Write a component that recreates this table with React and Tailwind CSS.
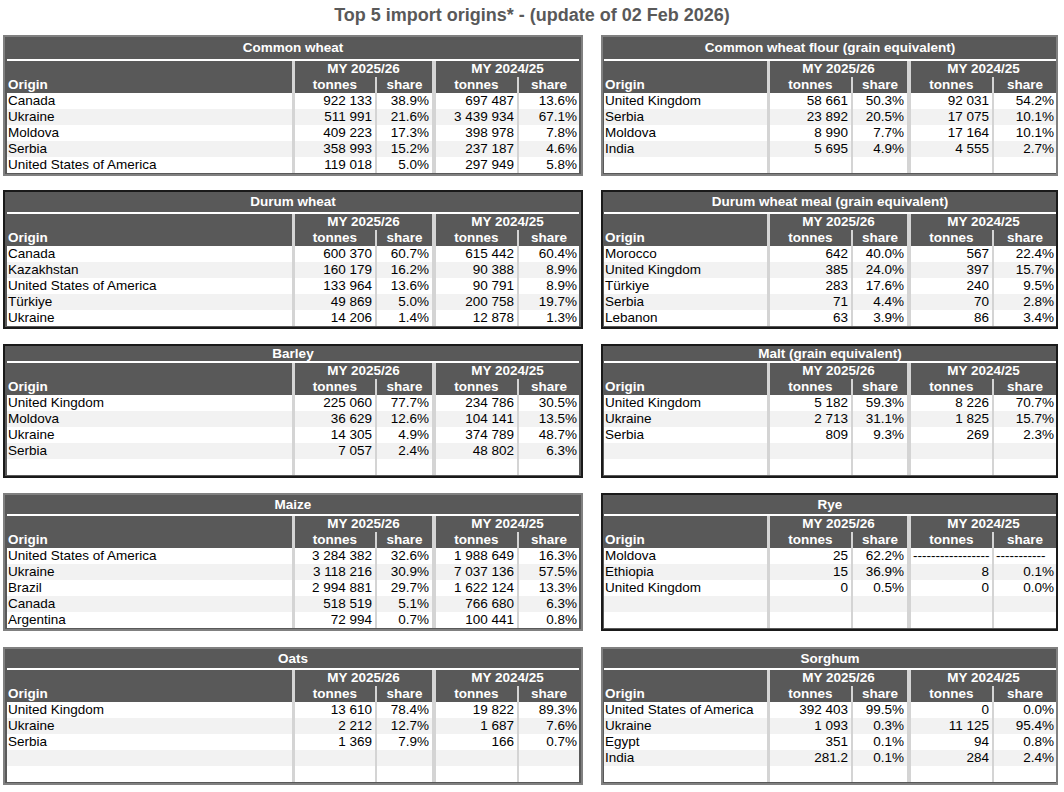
import React from "react";

const LEFT_COLS = "grid-cols-[285px_83px_57px_85px_62px]";
const RIGHT_COLS = "grid-cols-[163px_84px_56px_85px_64px]";

const rows = [
  {
    titleH: "h-[22px]",
    mt: "mt-[5px]",
    left: {
      title: "Common wheat",
      border: "border-[#808080]",
      data: [
        ["Canada", "922 133", "38.9%", "697 487", "13.6%"],
        ["Ukraine", "511 991", "21.6%", "3 439 934", "67.1%"],
        ["Moldova", "409 223", "17.3%", "398 978", "7.8%"],
        ["Serbia", "358 993", "15.2%", "237 187", "4.6%"],
        ["United States of America", "119 018", "5.0%", "297 949", "5.8%"],
      ],
    },
    right: {
      title: "Common wheat flour (grain equivalent)",
      border: "border-[#808080]",
      data: [
        ["United Kingdom", "58 661", "50.3%", "92 031", "54.2%"],
        ["Serbia", "23 892", "20.5%", "17 075", "10.1%"],
        ["Moldova", "8 990", "7.7%", "17 164", "10.1%"],
        ["India", "5 695", "4.9%", "4 555", "2.7%"],
      ],
    },
  },
  {
    titleH: "h-[20px]",
    mt: "mt-[14px]",
    left: {
      title: "Durum wheat",
      border: "border-[#1a1a1a]",
      data: [
        ["Canada", "600 370", "60.7%", "615 442", "60.4%"],
        ["Kazakhstan", "160 179", "16.2%", "90 388", "8.9%"],
        ["United States of America", "133 964", "13.6%", "90 791", "8.9%"],
        ["Türkiye", "49 869", "5.0%", "200 758", "19.7%"],
        ["Ukraine", "14 206", "1.4%", "12 878", "1.3%"],
      ],
    },
    right: {
      title: "Durum wheat meal (grain equivalent)",
      border: "border-[#1a1a1a]",
      data: [
        ["Morocco", "642", "40.0%", "567", "22.4%"],
        ["United Kingdom", "385", "24.0%", "397", "15.7%"],
        ["Türkiye", "283", "17.6%", "240", "9.5%"],
        ["Serbia", "71", "4.4%", "70", "2.8%"],
        ["Lebanon", "63", "3.9%", "86", "3.4%"],
      ],
    },
  },
  {
    titleH: "h-[15px]",
    mt: "mt-[15px]",
    left: {
      title: "Barley",
      border: "border-[#1a1a1a]",
      data: [
        ["United Kingdom", "225 060", "77.7%", "234 786", "30.5%"],
        ["Moldova", "36 629", "12.6%", "104 141", "13.5%"],
        ["Ukraine", "14 305", "4.9%", "374 789", "48.7%"],
        ["Serbia", "7 057", "2.4%", "48 802", "6.3%"],
      ],
    },
    right: {
      title: "Malt (grain equivalent)",
      border: "border-[#1a1a1a]",
      data: [
        ["United Kingdom", "5 182", "59.3%", "8 226", "70.7%"],
        ["Ukraine", "2 713", "31.1%", "1 825", "15.7%"],
        ["Serbia", "809", "9.3%", "269", "2.3%"],
      ],
    },
  },
  {
    titleH: "h-[19px]",
    mt: "mt-[15px]",
    left: {
      title: "Maize",
      border: "border-[#808080]",
      data: [
        ["United States of America", "3 284 382", "32.6%", "1 988 649", "16.3%"],
        ["Ukraine", "3 118 216", "30.9%", "7 037 136", "57.5%"],
        ["Brazil", "2 994 881", "29.7%", "1 622 124", "13.3%"],
        ["Canada", "518 519", "5.1%", "766 680", "6.3%"],
        ["Argentina", "72 994", "0.7%", "100 441", "0.8%"],
      ],
    },
    right: {
      title: "Rye",
      border: "border-[#1a1a1a]",
      data: [
        ["Moldova", "25", "62.2%", "-", "-"],
        ["Ethiopia", "15", "36.9%", "8", "0.1%"],
        ["United Kingdom", "0", "0.5%", "0", "0.0%"],
      ],
    },
  },
  {
    titleH: "h-[19px]",
    mt: "mt-[16px]",
    left: {
      title: "Oats",
      border: "border-[#808080]",
      data: [
        ["United Kingdom", "13 610", "78.4%", "19 822", "89.3%"],
        ["Ukraine", "2 212", "12.7%", "1 687", "7.6%"],
        ["Serbia", "1 369", "7.9%", "166", "0.7%"],
      ],
    },
    right: {
      title: "Sorghum",
      border: "border-[#808080]",
      data: [
        ["United States of America", "392 403", "99.5%", "0", "0.0%"],
        ["Ukraine", "1 093", "0.3%", "11 125", "95.4%"],
        ["Egypt", "351", "0.1%", "94", "0.8%"],
        ["India", "281.2", "0.1%", "284", "2.4%"],
      ],
    },
  },
];

const div = "border-[#d4d4d4]";

const Panel = ({ table, cols, pad, titleH }) => {
  const data = [...table.data];
  while (data.length < 5) data.push(["", "", "", "", ""]);

  return (
    <div className={`border-2 ${table.border} bg-[#595959] pb-px ${pad}`}>
      <div className={`${titleH} flex items-center justify-center text-[13.5px] font-bold text-white leading-4 whitespace-nowrap`}>
        {table.title}
      </div>
      <div className="h-[2px] bg-white" />
      <div className={`grid ${cols} text-[13.5px] leading-4 whitespace-nowrap`}>
        {/* header row 1 */}
        <div className="h-4" />
        <div className={`col-span-2 h-4 border-l-[3px] ${div} text-center font-bold text-white`}>
          MY 2025/26
        </div>
        <div className={`col-span-2 h-4 border-l-4 ${div} text-center font-bold text-white`}>
          MY 2024/25
        </div>
        {/* header row 2 */}
        <div className="h-4 pl-px font-bold text-white">Origin</div>
        <div className={`h-4 border-l-[3px] ${div} text-center font-bold text-white`}>tonnes</div>
        <div className={`h-4 border-l-2 ${div} text-center font-bold text-white`}>share</div>
        <div className={`h-4 border-l-4 ${div} text-center font-bold text-white`}>tonnes</div>
        <div className={`h-4 border-l-2 ${div} text-center font-bold text-white`}>share</div>

        {data.map((r, i) => {
          const bg = i % 2 === 1 ? "bg-[#f2f2f2]" : "bg-white";
          const dash = r[3] === "-";
          return (
            <React.Fragment key={i}>
              <div className={`h-4 ${bg} pl-px text-black`}>{r[0]}</div>
              <div className={`h-4 ${bg} border-l-[3px] ${div} pr-[3px] text-right text-black`}>{r[1]}</div>
              <div className={`h-4 ${bg} border-l-2 ${div} pr-[3px] text-right text-black`}>{r[2]}</div>
              {dash ? (
                <>
                  <div className={`h-4 ${bg} border-l-4 ${div} pl-[2px] text-black overflow-hidden`}>
                    -----------------
                  </div>
                  <div className={`h-4 ${bg} border-l-2 ${div} pl-[2px] text-black overflow-hidden`}>
                    -----------
                  </div>
                </>
              ) : (
                <>
                  <div className={`h-4 ${bg} border-l-4 ${div} pr-[3px] text-right text-black`}>{r[3]}</div>
                  <div className={`h-4 ${bg} border-l-2 ${div} pr-[2px] text-right text-black`}>{r[4]}</div>
                </>
              )}
            </React.Fragment>
          );
        })}
      </div>
    </div>
  );
};

const App = () => {
  return (
    <div className="w-[1064px] h-[792px] bg-white font-['Liberation_Sans',Arial,sans-serif] overflow-hidden">
      <div className="h-[30px] flex items-center justify-center text-[18px] font-bold text-[#595959]">
        Top 5 import origins* - (update of 02 Feb 2026)
      </div>
      {rows.map((row, i) => (
        <div key={i} className={`flex gap-[18px] pl-[3px] ${row.mt}`}>
          <div className="w-[580px]">
            <Panel table={row.left} cols={LEFT_COLS} pad="pl-[2px] pr-[2px]" titleH={row.titleH} />
          </div>
          <div className="w-[457px]">
            <Panel table={row.right} cols={RIGHT_COLS} pad="pl-px pr-0" titleH={row.titleH} />
          </div>
        </div>
      ))}
    </div>
  );
};

export default App;
